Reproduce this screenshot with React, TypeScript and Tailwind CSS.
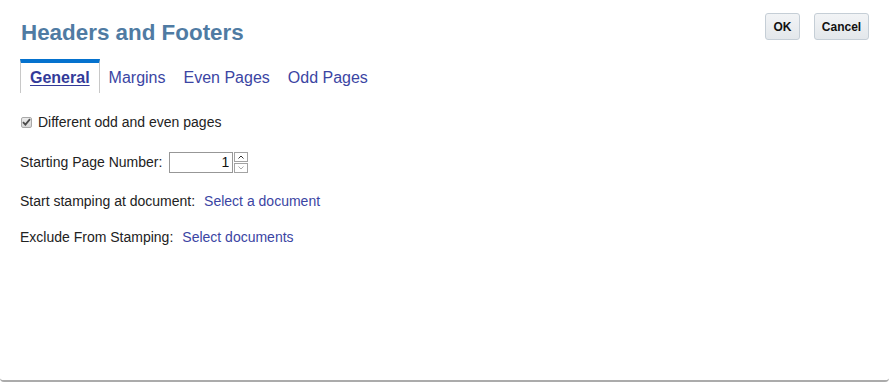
import React, { useState } from "react";

const font = { fontFamily: '"Liberation Sans", Arial, sans-serif' };

const tabs = ["General", "Margins", "Even Pages", "Odd Pages"];

export default function App() {
  const [active, setActive] = useState("General");
  const [startPage, setStartPage] = useState(1);

  return (
    <div
      className="h-[382px] w-[889px] bg-white border-b-2 border-[#ababab] rounded-b-[4px] flex flex-col text-[#222]"
      style={font}
    >
      <div className="flex items-start justify-between pl-[21px] pr-[20px] pt-[13px]">
        <h1 className="text-[22.4px] leading-[26px] font-bold text-[#4f7ba3] mt-[7px]">Headers and Footers</h1>
        <div className="flex gap-[14px]">
          <button className="h-[27px] w-[35px] text-[12px] font-bold text-[#111] rounded-[3px] border border-[#c5ced6] bg-gradient-to-b from-[#f2f4f6] to-[#e3e7eb]">
            OK
          </button>
          <button className="h-[27px] w-[55px] text-[12px] font-bold text-[#111] rounded-[3px] border border-[#c5ced6] bg-gradient-to-b from-[#f2f4f6] to-[#e3e7eb]">
            Cancel
          </button>
        </div>
      </div>

      {/* tabs */}
      <div className="flex pl-[20px] mt-[13px]">
        {tabs.map((t) =>
          t === active ? (
            <div
              key={t}
              className="h-[34px] border-t-4 border-t-[#0572ce] border-x border-x-[#c8c8c8] px-[9px] pt-[5px] text-[16px] leading-[20px] font-bold text-[#333a99] underline underline-offset-[2px] cursor-pointer"
            >
              {t}
            </div>
          ) : (
            <div
              key={t}
              onClick={() => setActive(t)}
              className="h-[34px] border-t-4 border-t-transparent px-[9px] pt-[5px] text-[16px] leading-[20px] text-[#3b45a3] cursor-pointer"
            >
              {t}
            </div>
          )
        )}
      </div>

      <div className="pl-[20px] text-[14px] leading-[16px] text-[#222]">
        <label className="flex items-center mt-[21px] h-[16px]">
          <span className="ml-[1px] w-[11px] h-[11px] border border-[#a9a9a9] rounded-[2px] bg-gradient-to-b from-[#ececec] to-[#d6d6d6] flex items-center justify-center">
            <svg width="9" height="8" viewBox="0 0 9 8">
              <path d="M1 4.2 L3.4 6.6 L8 1.2" fill="none" stroke="#4a4a4a" strokeWidth="1.8" />
            </svg>
          </span>
          <span className="ml-[6px]">Different odd and even pages</span>
        </label>

        <div className="flex items-center mt-[22px] h-[20px]">
          <span>Starting Page Number:</span>
          <div className="ml-[7px] flex">
            <input
              value={startPage}
              onChange={(e) => setStartPage(Number(e.target.value) || 0)}
              className="w-[64px] h-[21px] border border-[#979797] text-right pr-[3px] text-[14px] text-[#111] outline-none"
              style={font}
            />
            <div className="ml-[1px] flex flex-col gap-[1px]">
              <button
                onClick={() => setStartPage(startPage + 1)}
                className="w-[14px] h-[10px] border border-[#a3a3a3] bg-white flex items-center justify-center"
              >
                <svg width="6" height="4" viewBox="0 0 6 4">
                  <path d="M0.5 3.5 L3 1 L5.5 3.5" fill="none" stroke="#333" strokeWidth="1" />
                </svg>
              </button>
              <button
                onClick={() => setStartPage(Math.max(0, startPage - 1))}
                className="w-[14px] h-[10px] border border-[#a3a3a3] bg-white flex items-center justify-center"
              >
                <svg width="6" height="4" viewBox="0 0 6 4">
                  <path d="M0.5 0.5 L3 3 L5.5 0.5" fill="none" stroke="#aaa" strokeWidth="1" />
                </svg>
              </button>
            </div>
          </div>
        </div>

        <div className="flex items-center mt-[19px] h-[20px]">
          <span>Start stamping at document:</span>
          <a className="ml-[9px] text-[#3b45a3] cursor-pointer">Select a document</a>
        </div>

        <div className="flex items-center mt-[16px] h-[20px]">
          <span>Exclude From Stamping:</span>
          <a className="ml-[9px] text-[#3b45a3] cursor-pointer">Select documents</a>
        </div>
      </div>
    </div>
  );
}
